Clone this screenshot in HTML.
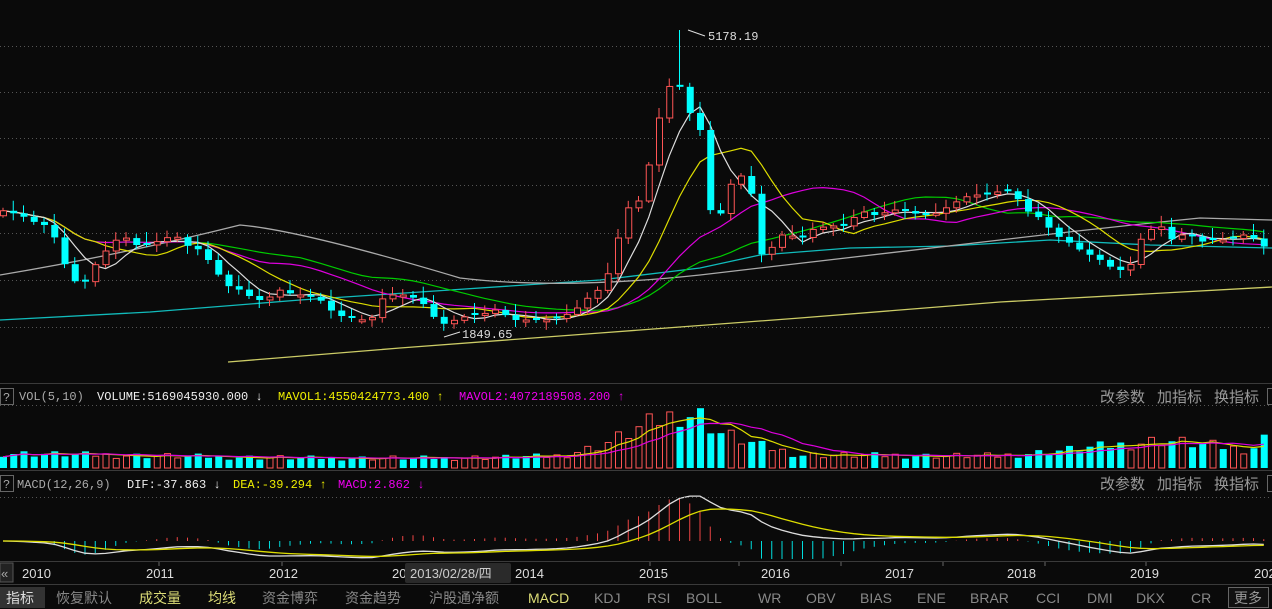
<!DOCTYPE html>
<html><head><meta charset="utf-8"><style>
body{margin:0;background:#0a0a0a;width:1272px;height:609px;overflow:hidden;font-family:"Liberation Sans","Noto Sans CJK SC",sans-serif}
svg{position:absolute;left:0;top:0}
.t{font-family:"Liberation Mono","Noto Sans CJK SC",monospace;font-size:12px}
.c{font-family:"Liberation Sans","Noto Sans CJK SC",sans-serif}
</style></head><body>
<svg id="s" width="1272" height="609" xmlns="http://www.w3.org/2000/svg">
<rect width="1272" height="609" fill="#0a0a0a"/>
<g id="grid" stroke="#555" stroke-dasharray="1,3" stroke-width="1"></g>
<g id="ma"></g>
<g id="cd"></g>
<line x1="0" y1="383.5" x2="1272" y2="383.5" stroke="#3a3a3a"/>
<line x1="0" y1="470.5" x2="1272" y2="470.5" stroke="#3a3a3a"/>
<line x1="0" y1="561.5" x2="1272" y2="561.5" stroke="#3a3a3a"/>
<line x1="0" y1="584.5" x2="1272" y2="584.5" stroke="#3a3a3a"/>
<line x1="0" y1="405.5" x2="1272" y2="405.5" stroke="#555" stroke-dasharray="1,3"/>
<line x1="0" y1="497.5" x2="1272" y2="497.5" stroke="#555" stroke-dasharray="1,3"/>
<line x1="688" y1="30" x2="705" y2="36" stroke="#ddd"/>
<text x="708" y="40" class="t" fill="#ddd">5178.19</text>
<line x1="444" y1="337" x2="460" y2="332" stroke="#ddd"/>
<text x="462" y="338" class="t" fill="#ddd">1849.65</text>
<rect x="0.5" y="388.5" width="13" height="16" fill="none" stroke="#666"/>
<text x="3" y="401" class="t" fill="#aaa">?</text>
<text x="19" y="400" class="t" fill="#aaa">VOL(5,10)</text>
<text x="97" y="400" class="t" fill="#eee">VOLUME:5169045930.000 ↓</text>
<text x="278" y="400" class="t" fill="#ee0">MAVOL1:4550424773.400 ↑</text>
<text x="459" y="400" class="t" fill="#e0e">MAVOL2:4072189508.200 ↑</text>
<text x="1100" y="402" class="c" font-size="15" fill="#999">改参数</text>
<text x="1157" y="402" class="c" font-size="15" fill="#999">加指标</text>
<text x="1214" y="402" class="c" font-size="15" fill="#999">换指标</text>
<rect x="1267.5" y="388.5" width="8" height="16" fill="none" stroke="#666"/>
<rect x="0.5" y="475.5" width="13" height="16" fill="none" stroke="#666"/>
<text x="3" y="488" class="t" fill="#aaa">?</text>
<text x="17" y="488" class="t" fill="#aaa">MACD(12,26,9)</text>
<text x="127" y="488" class="t" fill="#eee">DIF:-37.863 ↓</text>
<text x="233" y="488" class="t" fill="#ee0">DEA:-39.294 ↑</text>
<text x="338" y="488" class="t" fill="#e0e">MACD:2.862 ↓</text>
<text x="1100" y="489" class="c" font-size="15" fill="#999">改参数</text>
<text x="1157" y="489" class="c" font-size="15" fill="#999">加指标</text>
<text x="1214" y="489" class="c" font-size="15" fill="#999">换指标</text>
<rect x="1267.5" y="475.5" width="8" height="16" fill="none" stroke="#666"/>
<rect x="0" y="563" width="13" height="19" fill="#222" stroke="#555"/>
<text x="1" y="578" class="c" font-size="13" fill="#aaa">«</text>
<g class="c" font-size="13" fill="#ddd">
<text x="22" y="578">2010</text><text x="146" y="578">2011</text><text x="269" y="578">2012</text>
<text x="392" y="578">20</text><text x="515" y="578">2014</text><text x="639" y="578">2015</text>
<text x="761" y="578">2016</text><text x="885" y="578">2017</text><text x="1007" y="578">2018</text>
<text x="1130" y="578">2019</text><text x="1254" y="578">202</text>
</g>
<g stroke="#666"><line x1="159" y1="562" x2="159" y2="566"/><line x1="282" y1="562" x2="282" y2="566"/><line x1="650" y1="562" x2="650" y2="566"/><line x1="739" y1="562" x2="739" y2="566"/><line x1="841" y1="562" x2="841" y2="566"/><line x1="943" y1="562" x2="943" y2="566"/><line x1="1045" y1="562" x2="1045" y2="566"/><line x1="1146" y1="562" x2="1146" y2="566"/></g>
<rect x="405" y="563" width="106" height="20" rx="2" fill="#2a2a2a"/>
<text x="410" y="578" class="c" font-size="13" fill="#ccc">2013/02/28/四</text>
<rect x="0" y="587" width="45" height="21" fill="#333"/>
<g class="c" font-size="14">
<text x="6" y="603" fill="#ddd">指标</text>
<text x="56" y="603" fill="#888">恢复默认</text>
<text x="139" y="603" fill="#dd7">成交量</text>
<text x="208" y="603" fill="#dd7">均线</text>
<text x="262" y="603" fill="#888">资金博弈</text>
<text x="345" y="603" fill="#888">资金趋势</text>
<text x="429" y="603" fill="#888">沪股通净额</text>
<text x="528" y="603" fill="#dd7">MACD</text>
<text x="594" y="603" fill="#888">KDJ</text>
<text x="647" y="603" fill="#888">RSI</text>
<text x="686" y="603" fill="#888">BOLL</text>
<text x="758" y="603" fill="#888">WR</text>
<text x="806" y="603" fill="#888">OBV</text>
<text x="860" y="603" fill="#888">BIAS</text>
<text x="917" y="603" fill="#888">ENE</text>
<text x="970" y="603" fill="#888">BRAR</text>
<text x="1036" y="603" fill="#888">CCI</text>
<text x="1087" y="603" fill="#888">DMI</text>
<text x="1136" y="603" fill="#888">DKX</text>
<text x="1191" y="603" fill="#888">CR</text>
</g>
<rect x="1228.5" y="587.5" width="40" height="20" fill="#111" stroke="#666"/>
<text x="1234" y="603" class="c" font-size="14" fill="#999">更多</text>
</svg>
<script>
(function(){
var NS="http://www.w3.org/2000/svg";
function el(p,n,a){var e=document.createElementNS(NS,n);for(var k in a)e.setAttribute(k,a[k]);p.appendChild(e);return e;}
var g=document.getElementById('grid');
[46,92,138,185,233,280,327].forEach(function(y){el(g,'line',{x1:0,y1:y+.5,x2:1272,y2:y+.5});});
var T=[[0,210],[20,215],[40,225],[50,225],[62,260],[80,290],[95,265],[110,245],[122,235],[135,245],[150,245],[160,240],[175,235],[185,245],[200,250],[212,265],[225,285],[240,290],[255,300],[265,300],[280,290],[295,295],[305,295],[320,300],[330,310],[345,318],[355,318],[370,322],[380,300],[390,295],[405,295],[420,300],[440,325],[455,320],[470,315],[480,315],[495,310],[505,315],[515,320],[530,320],[545,320],[560,318],[575,310],[585,300],[598,290],[610,270],[625,210],[640,200],[650,160],[665,90],[677,80],[688,110],[700,130],[710,210],[720,215],[730,185],[740,175],[750,185],[760,255],[770,250],[780,235],[790,235],[800,240],[810,230],[820,228],[830,225],[840,228],[850,222],[860,210],[870,215],[880,215],[890,210],[900,210],[910,212],[920,215],[930,215],[940,212],[950,205],[960,200],[970,195],[985,195],[1005,190],[1015,195],[1025,210],[1040,218],[1055,235],[1065,240],[1080,250],[1090,255],[1100,260],[1115,270],[1125,270],[1135,260],[1140,240],[1150,230],[1160,225],[1170,240],[1180,235],[1190,235],[1200,242],[1210,240],[1220,240],[1230,240],[1240,235],[1250,235],[1260,245],[1272,250]];
function interp(t,x){for(var i=1;i<t.length;i++){if(x<=t[i][0]){var a=t[i-1],b=t[i];return a[1]+(b[1]-a[1])*(x-a[0])/(b[0]-a[0]);}}return t[t.length-1][1];}
var step=10.25,xs=[],cl=[];
for(var x=3;x<1272;x+=step){xs.push(x);cl.push(interp(T,x));}
var n=xs.length;
var cd=document.getElementById('cd'),ma=document.getElementById('ma');
function sma(a,p){return a.map(function(v,i){var s=0,c=0;for(var j=Math.max(0,i-p+1);j<=i;j++){s+=a[j];c++;}return s/c;});}
function line(arr,col,p,w){var d='';arr.forEach(function(v,i){d+=(i?'L':'M')+xs[i].toFixed(1)+','+v.toFixed(1);});el(p,'path',{d:d,fill:'none',stroke:col,'stroke-width':w||1.2});}
el(ma,'path',{d:'M0,320 L150,312 L300,300 L450,290 L600,280 L700,268 L760,255 L850,248 L950,246 L1050,240 L1150,245 L1272,248',fill:'none',stroke:'#1bb',"stroke-width":1.3});
el(ma,'path',{d:'M228,362 L400,348 L600,333 L800,318 L1000,302 L1272,287',fill:'none',stroke:'#cc6',"stroke-width":1.3});
el(ma,'path',{d:'M0,275 Q120,255 240,225 Q300,230 460,278 Q560,290 700,275 Q850,258 1000,240 Q1100,228 1200,218 L1272,220',fill:'none',stroke:'#aaa',"stroke-width":1.3});
line(sma(cl,30),'#0c0',ma);
line(sma(cl,20),'#d0d',ma);
line(sma(cl,10),'#dd0',ma);
line(sma(cl,5),'#ddd',ma);
for(var i=0;i<n;i++){var c=cl[i],o=i?cl[i-1]:c+5,x=xs[i];
 if(Math.abs(c-o)<2)o=c+((i%2)?2:-2);
 var up=c<o,top=Math.min(c,o),h=Math.abs(c-o);
 var hi=top-3-(i*7%9),lo=top+h+2+(i*5%7);
 if(i==Math.round((677-3)/step))hi=30;
 var col=up?'#f55':'#0ff';
 el(cd,'line',{x1:x,y1:hi,x2:x,y2:lo,stroke:col});
 if(up)el(cd,'rect',{x:x-2.5,y:top,width:6,height:h,fill:'#0a0a0a',stroke:col});
 else el(cd,'rect',{x:x-3,y:top,width:7,height:h,fill:col});
}
var V=[[0,15],[100,13],[300,10],[450,10],[560,12],[600,22],[640,40],[680,55],[700,52],[720,35],[760,22],[800,13],[1000,12],[1140,25],[1160,28],[1250,18],[1265,30],[1272,28]];
var vol=[];for(i=0;i<n;i++){var b=interp(V,xs[i]);vol.push(b*(0.75+0.5*((i*37%11)/10)));}
var base=468;
for(i=0;i<n;i++){var up=i&&cl[i]<cl[i-1],h=Math.min(vol[i],60);
 if(up)el(cd,'rect',{x:xs[i]-2.5,y:base-h,width:6,height:h,fill:'none',stroke:'#f55'});
 else el(cd,'rect',{x:xs[i]-3,y:base-h,width:7,height:h,fill:'#0ff'});}
function vline(arr,col){var d='';arr.forEach(function(v,i){d+=(i?'L':'M')+xs[i].toFixed(1)+','+(base-Math.min(v,60)).toFixed(1);});el(cd,'path',{d:d,fill:'none',stroke:col,'stroke-width':1.2});}
vline(sma(vol,5),'#dd0');vline(sma(vol,10),'#d0d');
var pr=cl.map(function(y){return 1849+(335-y)/0.0916;});
function ema(a,p){var k=2/(p+1),r=[],e=a[0];a.forEach(function(v){e=e+k*(v-e);r.push(e);});return r;}
var e12=ema(pr,12),e26=ema(pr,26),dif=e12.map(function(v,i){return v-e26[i];}),dea=ema(dif,9);
var z=541,sc=0.08;
function cy(v){return Math.max(494,Math.min(559,z-v*sc));}
for(i=0;i<n;i++){var m=2*(dif[i]-dea[i]);el(cd,'line',{x1:xs[i],y1:z,x2:xs[i],y2:cy(m),stroke:m>0?'#e44':'#0dd'});}
function mline(arr,col){var d='';arr.forEach(function(v,i){d+=(i?'L':'M')+xs[i].toFixed(1)+','+cy(v).toFixed(1);});el(cd,'path',{d:d,fill:'none',stroke:col,'stroke-width':1.3});}
mline(dif,'#ddd');mline(dea,'#dd0');
})();
</script>
</body></html>
